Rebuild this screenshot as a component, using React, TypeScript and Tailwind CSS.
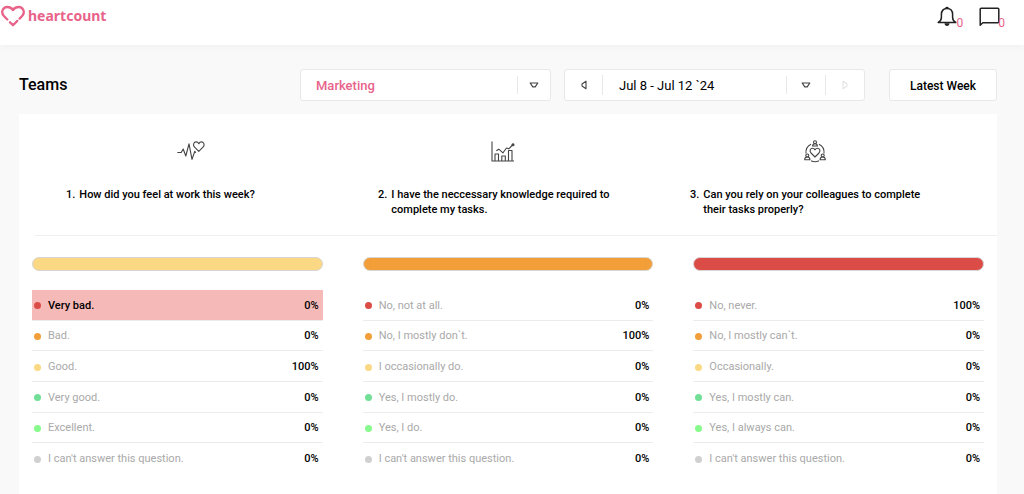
import type { ReactNode } from "react";

const questions = [
  "How did you feel at work this week?",
  "I have the neccessary knowledge required to complete my tasks.",
  "Can you rely on your colleagues to complete their tasks properly?",
];

const dots = [
  "bg-[#dc4c46]",
  "bg-[#f29f3a]",
  "bg-[#fad884]",
  "bg-[#72df96]",
  "bg-[#88f98c]",
  "bg-[#d0d0d0]",
];

const results = [
  {
    bar: "bg-[#fad884]",
    selected: 0,
    answers: [
      ["Very bad.", "0%"],
      ["Bad.", "0%"],
      ["Good.", "100%"],
      ["Very good.", "0%"],
      ["Excellent.", "0%"],
      ["I can't answer this question.", "0%"],
    ],
  },
  {
    bar: "bg-[#f29f3a]",
    selected: -1,
    answers: [
      ["No, not at all.", "0%"],
      ["No, I mostly don`t.", "100%"],
      ["I occasionally do.", "0%"],
      ["Yes, I mostly do.", "0%"],
      ["Yes, I do.", "0%"],
      ["I can't answer this question.", "0%"],
    ],
  },
  {
    bar: "bg-[#dc4c46]",
    selected: -1,
    answers: [
      ["No, never.", "100%"],
      ["No, I mostly can`t.", "0%"],
      ["Occasionally.", "0%"],
      ["Yes, I mostly can.", "0%"],
      ["Yes, I always can.", "0%"],
      ["I can't answer this question.", "0%"],
    ],
  },
];

function Logo() {
  return (
    <svg width="24" height="22" viewBox="0 0 24 22" fill="none" stroke="#e8638a" strokeWidth="2.3" strokeLinecap="round" strokeLinejoin="round" aria-hidden="true">
      <path d="M6.300 14.500 2.900 11C-.5 7.200 1.700 2 6.500 2c2.500 0 4.500 1.300 5.500 3.100C13 3.300 15 2 17.500 2c4.800 0 7 5.200 3.600 9L18.600 13.600" />
      <path d="M9 17.300 12 20.200l4.300-4.300" />
    </svg>
  );
}

function BellIcon() {
  return (
    <svg width="20" height="21" viewBox="0 0 20 21" fill="none" stroke="#222" strokeWidth="1.500" strokeLinejoin="round" aria-hidden="true">
      <path d="M1.200 16.500c2.200-1.300 3.200-2.700 3.200-5V8.500c0-3.600 2.100-6 5.600-6s5.600 2.400 5.600 6v3c0 2.300 1 3.700 3.200 5Z" />
      <path d="M8.800 2.300a1.300 1.300 0 0 1 2.400 0" />
      <path d="M7.500 17.200h5c-.2 1.700-1.100 2.700-2.500 2.700s-2.300-1-2.500-2.700Z" fill="#222" stroke="none" />
    </svg>
  );
}

function MessageIcon() {
  return (
    <svg width="21" height="20" viewBox="0 0 21 20" fill="none" stroke="#222" strokeWidth="1.500" strokeLinejoin="round" aria-hidden="true">
      <path d="M1.200 18.200V2.200c0-.6.4-1 1-1h16.600c.6 0 1 .4 1 1v12.600c0 .6-.4 1-1 1H3.800Z" />
    </svg>
  );
}

function PulseIcon() {
  return (
    <svg width="28" height="24" viewBox="0 0 28 24" fill="none" stroke="#444" strokeWidth="1.100" strokeLinejoin="round" strokeLinecap="round" aria-hidden="true">
      <path d="M.8 12.500h3.400l2-3.500 2.600 7L12 3.800l3 15.600 2.800-8.200.8 1.300" />
      <path d="m21.800 11.300-4.200-4.100c-2.200-2.500-.6-5.300 1.600-5.300 1.300 0 2.100.8 2.600 1.800.5-1 1.300-1.800 2.600-1.800 2.200 0 3.800 2.800 1.600 5.300Z" />
    </svg>
  );
}

function ChartIcon() {
  return (
    <svg width="24" height="24" viewBox="0 0 24 24" fill="none" stroke="#444" strokeWidth="1.100" strokeLinejoin="round" aria-hidden="true">
      <path d="M1 1.500v19.500H23" />
      <path d="M4 21v-7h3.500v7M10.800 21v-5h3.500v5M17.500 21V10.500H21V21" />
      <path d="m5.300 10.800 2.500-1.600 4.200 3.600L15.500 8l2.300.8L22 4.500" />
      <circle cx="22" cy="4.800" r="1" fill="#444" />
    </svg>
  );
}

function ColleaguesIcon() {
  return (
    <svg width="24" height="24" viewBox="0 0 24 24" fill="none" stroke="#444" strokeWidth="1.100" strokeLinejoin="round" aria-hidden="true">
      <path d="M8 4.300A9.200 9.200 0 0 0 3 13.500M16 4.300A9.200 9.200 0 0 1 21 13.500M8 20.800a9.200 9.200 0 0 0 8 0" />
      <path d="M12 17 8 13c-2-2.500-.4-4.800 1.500-4.800 1.200 0 2 .7 2.500 1.600.5-.9 1.300-1.600 2.500-1.600 1.900 0 3.500 2.300 1.500 4.800Z" />
      <circle cx="12" cy="2.200" r="1.500" />
      <path d="M9.600 6c0-1.500.6-2.300 2.400-2.300s2.400.8 2.400 2.300Z" />
      <circle cx="4.300" cy="15.500" r="1.500" />
      <path d="M1.700 19.700c0-1.800.8-2.700 2.600-2.700s2.600.9 2.600 2.700Z" />
      <circle cx="19.700" cy="15.500" r="1.500" />
      <path d="M17.100 19.700c0-1.800.8-2.700 2.600-2.700s2.600.9 2.600 2.700Z" />
    </svg>
  );
}

const icons: ReactNode[] = [<PulseIcon />, <ChartIcon />, <ColleaguesIcon />];

function DownArrow() {
  return (
    <svg width="10" height="8" viewBox="0 0 10 8" fill="none" stroke="#444" strokeWidth="1.200" strokeLinejoin="round" aria-hidden="true">
      <path d="M1.200 2h7.600L6.200 5.800H3.800Z" />
    </svg>
  );
}

function SideArrow({ className }: { className: string }) {
  return (
    <svg className={className} width="8" height="10" viewBox="0 0 8 10" fill="none" stroke="currentColor" strokeWidth="1.100" strokeLinejoin="round" aria-hidden="true">
      <path d="M6 1.200v7.600L2 6V4Z" />
    </svg>
  );
}

export default function App() {
  return (
    <div className="min-h-screen bg-[#f9f9f9] font-['Roboto',sans-serif] text-black">
      <header className="flex h-[45px] items-start justify-between bg-white pl-px pr-[19px] shadow-[0_2px_8px_rgba(0,0,0,0.04)]">
        <a href="#" className="flex items-center gap-[3px] pt-1 text-[#e8638a]">
          <Logo />
          <span className="font-['Noto_Sans',sans-serif] text-sm font-bold leading-6">heartcount</span>
        </a>
        <div className="flex gap-4 pt-[6px] text-xs leading-3 text-[#e8638a]">
          <button type="button" aria-label="Notifications" className="flex items-end">
            <BellIcon />
            <span className="-mb-0.5">0</span>
          </button>
          <button type="button" aria-label="Messages" className="flex items-end">
            <MessageIcon />
            <span className="-mb-0.5 -ml-0.5">0</span>
          </button>
        </div>
      </header>

      <main className="pl-[19px] pr-[27px] pt-6">
        <div className="flex h-8 items-center">
          <h1 className="flex-1 text-base font-medium">Teams</h1>

          <div className="relative mr-[13px] h-8 w-[251px] rounded-[3px] border border-[#e8e8e8] bg-white">
            <select aria-label="Team" className="h-full w-full appearance-none pl-[15px] pt-0.5 text-[13px] font-medium text-[#e8638a]">
              <option>Marketing</option>
            </select>
            <span className="pointer-events-none absolute inset-y-1.5 right-0 flex w-[33px] items-center justify-center border-l border-[#e8e8e8]">
              <DownArrow />
            </span>
          </div>

          <div className="mr-6 flex h-8 w-[301px] items-center rounded-[3px] border border-[#e8e8e8] bg-white">
            <button type="button" aria-label="Previous week" className="flex h-5 w-[38px] items-center justify-center border-r border-[#e8e8e8]">
              <SideArrow className="text-[#444]" />
            </button>
            <div className="relative h-full flex-1">
              <select aria-label="Week" className="h-full w-full appearance-none pl-4 pt-0.5 text-[13px]">
                <option>Jul 8 - Jul 12 `24</option>
              </select>
              <span className="pointer-events-none absolute inset-y-1.5 right-0 flex w-[39px] items-center justify-center border-l border-[#e8e8e8]">
                <DownArrow />
              </span>
            </div>
            <button type="button" aria-label="Next week" disabled className="flex h-5 w-[39px] items-center justify-center border-l border-[#e8e8e8]">
              <SideArrow className="rotate-180 text-[#e4e4e4]" />
            </button>
          </div>

          <button type="button" className="h-8 w-[108px] rounded-[3px] border border-[#e8e8e8] bg-white pt-0.5 text-xs font-medium">
            Latest Week
          </button>
        </div>

        <section className="mt-[13px] min-h-[380px] bg-white pb-5 pt-[26px]">
          <ol className="ml-4 grid grid-cols-3 border-b border-[#f0f0f0] pb-[18px] pr-[26px]">
            {questions.map((question, i) => (
              <li key={question} className="flex flex-col items-center">
                {icons[i]}
                <p className="mt-[23px] flex w-full gap-1 pl-[31px] pr-10 text-[11px] font-medium leading-[15px]">
                  <span>{i + 1}.</span>
                  <span>{question}</span>
                </p>
              </li>
            ))}
          </ol>

          <div className="mt-[21px] grid grid-cols-3 gap-10 px-[13px]">
            {results.map((result, i) => (
              <div key={i}>
                <div className={`h-[14px] rounded-full border border-[#d6d6d6] ${result.bar}`} />
                <ul className="mt-[19px] grid h-46 grid-rows-6 text-[11px]">
                  {result.answers.map(([label, percent], j) => (
                    <li
                      key={label}
                      className={`flex items-center border-b pl-0.5 pr-1 pt-0.5 ${j === 5 ? "border-transparent" : "border-[#ececec]"} ${j === result.selected ? "bg-[#f5b9b7] font-medium text-black" : "text-[#a9a9a9]"}`}
                    >
                      <span className={`mr-[7px] size-[7px] rounded-full ${dots[j]}`} />
                      <span className="flex-1">{label}</span>
                      <span className="font-medium text-black">{percent}</span>
                    </li>
                  ))}
                </ul>
              </div>
            ))}
          </div>
        </section>
      </main>
    </div>
  );
}
